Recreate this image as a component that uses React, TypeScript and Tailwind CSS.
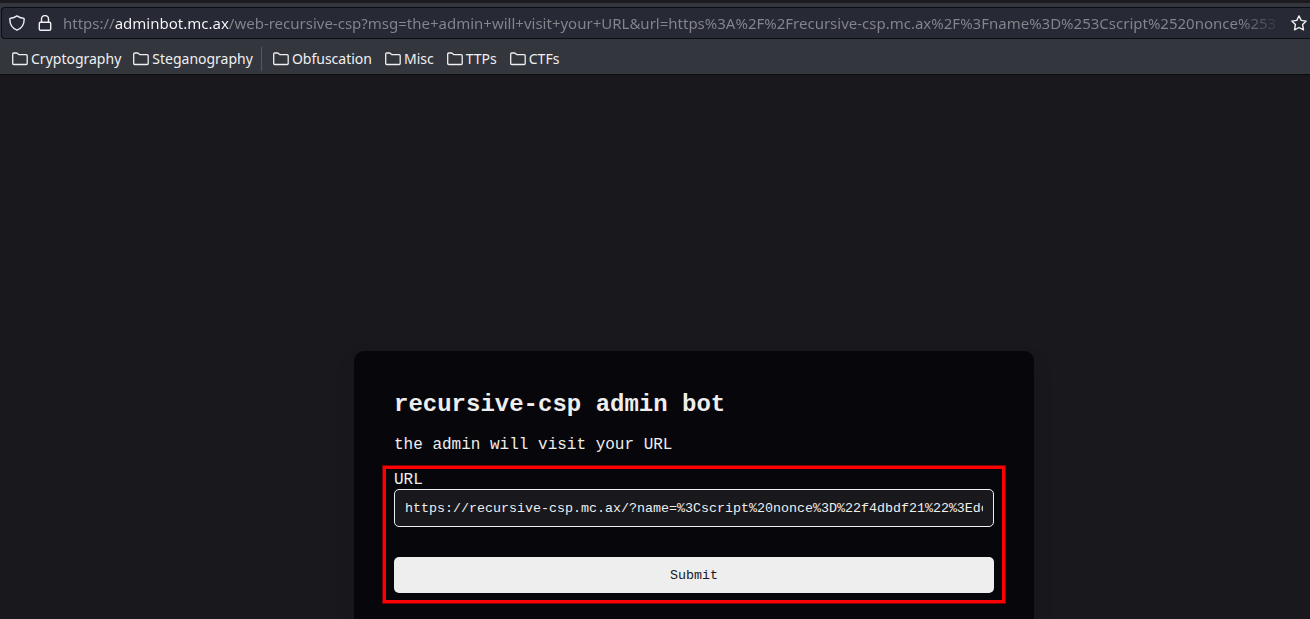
import React from "react";

const PAGE_URL =
  "https://adminbot.mc.ax/web-recursive-csp?msg=the+admin+will+visit+your+URL&url=https%3A%2F%2Frecursive-csp.mc.ax%2F%3Fname%3D%253Cscript%2520nonce%253";

const TARGET_URL =
  "https://recursive-csp.mc.ax/?name=%3Cscript%20nonce%3D%22f4dbdf21%22%3Edocument";

const bookmarkGroups = [
  ["Cryptography", "Steganography"],
  ["Obfuscation", "Misc", "TTPs", "CTFs"],
];

function ShieldIcon() {
  return (
    <svg viewBox="0 0 16 16" className="size-4" fill="none" stroke="currentColor" strokeWidth="1.4" strokeLinejoin="round" aria-hidden="true">
      <path d="M8 .9c2 1.500 4 2.100 6.400 2.300.5 0 .8.400.8.900 0 5-2.300 9.300-7.200 11.100C3.100 13.400.8 9.100.8 4.100c0-.5.300-.9.800-.9C4 3 6 2.400 8 .9z" />
    </svg>
  );
}

function LockIcon() {
  return (
    <svg viewBox="0 0 16 16" className="size-4" fill="none" stroke="currentColor" strokeWidth="1.4" aria-hidden="true">
      <rect x="2.300" y="7.200" width="11.400" height="8" rx="1.200" />
      <path d="M4.500 7V4a3.500 3.500 0 0 1 7 0v3" />
    </svg>
  );
}

function StarIcon() {
  return (
    <svg viewBox="0 0 16 16" className="size-4" fill="none" stroke="currentColor" strokeWidth="1.4" strokeLinejoin="round" aria-hidden="true">
      <path d="M8 .9l2.200 4.500 5 .7-3.600 3.500.9 5.200L8 12.500l-4.500 2.300.9-5.200L.8 6.100l5-.7z" />
    </svg>
  );
}

function FolderIcon() {
  return (
    <svg viewBox="0 0 16 16" className="size-4" fill="none" stroke="currentColor" strokeWidth="1.3" strokeLinejoin="round" aria-hidden="true">
      <path d="M.7 12.500V3c0-.6.400-1 1-1h3.100l2.200 1.700h7.200c.6 0 1 .4 1 1v7.800c0 .6-.4 1-1 1H1.700c-.6 0-1-.4-1-1z" />
    </svg>
  );
}

function AddressBar() {
  return (
    <div className="ml-px flex h-8 items-center rounded-l border border-r-0 border-[#0c0c13] bg-[#272934] pr-[3px] pl-[7px] text-[#f0f0f2]">
      <button type="button" aria-label="Tracking protection" className="shrink-0">
        <ShieldIcon />
      </button>
      <button type="button" aria-label="Site information" className="ml-3 shrink-0">
        <LockIcon />
      </button>
      <input
        aria-label="Address"
        defaultValue={PAGE_URL}
        className="ml-2.5 h-7 min-w-0 flex-1 bg-[linear-gradient(90deg,#85868c_51px,#fbfbfe_51px,#fbfbfe_166px,#85868c_166px,#85868c_calc(100%-48px),transparent_calc(100%-4px))] bg-clip-text font-['Noto_Sans',sans-serif] text-[15px] text-transparent outline-none"
      />
      <button type="button" aria-label="Bookmark this page" className="ml-1 shrink-0">
        <StarIcon />
      </button>
    </div>
  );
}

function BookmarksBar() {
  return (
    <nav aria-label="Bookmarks" className="flex h-[35px] items-center pt-1 pl-3 text-[#f0f0f2]">
      {bookmarkGroups.map((group, index) => (
        <div
          key={group[0]}
          className={index > 0 ? "ml-2 flex h-6 items-center gap-[13px] border-l border-[#55575e] pl-[11px]" : "flex items-center gap-3"}
        >
          {group.map((name) => (
            <button key={name} type="button" className="flex items-center gap-[3px]">
              <FolderIcon />
              <span>{name}</span>
            </button>
          ))}
        </div>
      ))}
    </nav>
  );
}

export default function App() {
  return (
    <div className="flex h-screen flex-col overflow-hidden bg-[#19181c]">
      <header className="shrink-0 border-t-[3px] border-b border-t-[#1c1b20] border-b-[#0c0c0f] bg-[#34363e] pt-1 font-['Noto_Sans',sans-serif] text-sm">
        <AddressBar />
        <BookmarksBar />
      </header>
      <main className="flex flex-1 justify-center pt-[276px] pl-[78px]">
        <section className="h-max w-full max-w-[680px] rounded-[10px] bg-[#07060b] p-10 font-['Liberation_Mono',monospace] text-base leading-[18px] text-[#eeeeee] shadow-[0_10px_20px_rgba(0,0,0,0.12)]">
          <h1 className="text-2xl leading-[27px] font-bold">recursive-csp admin bot</h1>
          <p className="mt-[18px]">the admin will visit your URL</p>
          <form className="relative mt-4 flex flex-col" onSubmit={(event) => event.preventDefault()}>
            <label htmlFor="url" className="pt-px">URL</label>
            <input
              id="url"
              name="url"
              defaultValue={TARGET_URL}
              className="h-[38px] w-full rounded-[5px] border border-[#eeeeee] bg-[#19181c] px-2.5 text-[10pt] outline-none"
            />
            <button type="submit" className="mt-[30px] h-9 rounded-[5px] bg-[#eeeeee] pt-0.5 text-[10pt] text-[#19181c]">
              Submit
            </button>
            <div className="pointer-events-none absolute -inset-x-[11px] -top-1 -bottom-2.5 border-[3px] border-[#ff0000] shadow-[0_0_0_1px_#7a0005]" />
          </form>
        </section>
      </main>
    </div>
  );
}
